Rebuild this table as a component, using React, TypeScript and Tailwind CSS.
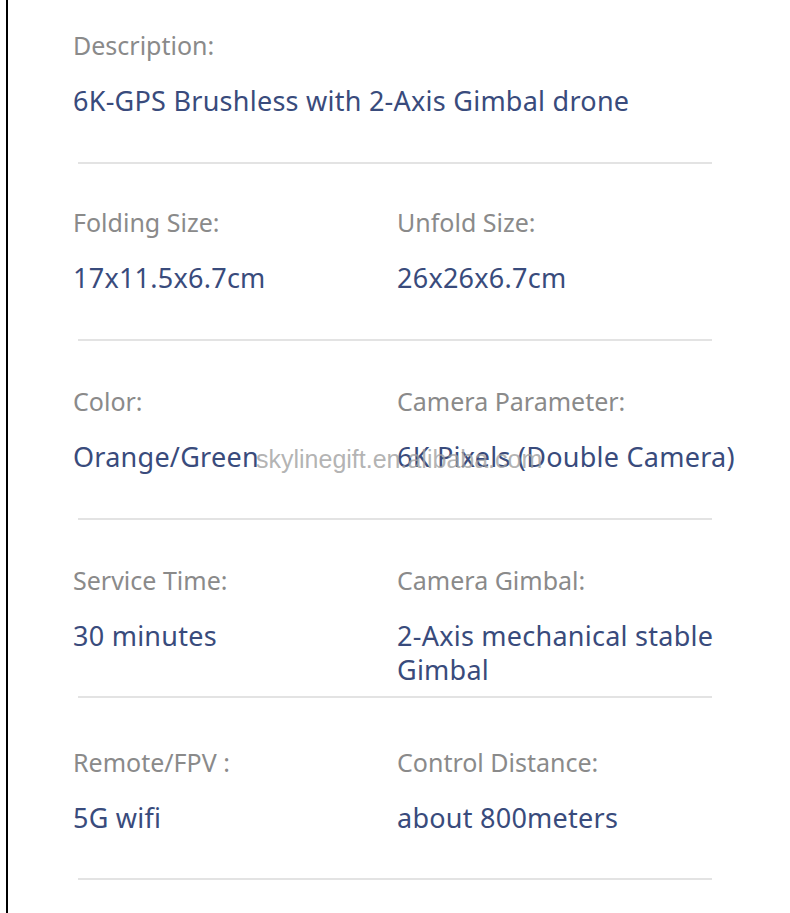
import React from "react";

type Spec = { label: string; value: string };

type Row = { cells: Spec[]; h: string; pt: string };

const rows: Row[] = [
  {
    cells: [{ label: "Description:", value: "6K-GPS Brushless with 2-Axis Gimbal drone" }],
    h: "h-[164px]",
    pt: "pt-[28px]",
  },
  {
    cells: [
      { label: "Folding Size:", value: "17x11.5x6.7cm" },
      { label: "Unfold Size:", value: "26x26x6.7cm" },
    ],
    h: "h-[177px]",
    pt: "pt-[41px]",
  },
  {
    cells: [
      { label: "Color:", value: "Orange/Green" },
      { label: "Camera Parameter:", value: "6K Pixels (Double Camera)" },
    ],
    h: "h-[179px]",
    pt: "pt-[43px]",
  },
  {
    cells: [
      { label: "Service Time:", value: "30 minutes" },
      { label: "Camera Gimbal:", value: "2-Axis mechanical stable Gimbal" },
    ],
    h: "h-[178px]",
    pt: "pt-[43px]",
  },
  {
    cells: [
      { label: "Remote/FPV :", value: "5G wifi" },
      { label: "Control Distance:", value: "about 800meters" },
    ],
    h: "h-[182px]",
    pt: "pt-[47px]",
  },
];

const Cell = ({ spec, pos }: { spec: Spec; pos: "full" | "left" | "right" }) => (
  <div className={pos === "left" ? "w-[324px] shrink-0" : "flex-1 min-w-0"}>
    <div className="text-[25px] leading-[34px] text-[#8a8a8a]">{spec.label}</div>
    <div className="mt-[22px] text-[27px] leading-[34px] tracking-[0.25px] text-[#394b7c]">
      {spec.value}
    </div>
  </div>
);

export default function App() {
  return (
    <div className="relative h-[913px] w-[790px] bg-white overflow-hidden font-['Noto_Sans',sans-serif]">
      <div className="ml-[6px] h-full border-l-2 border-black">
        <div className="pl-[65px] pr-[20px]">
          {rows.map((row, i) => (
            <div key={i} className={`${row.h} flex flex-col`}>
              <div className={`${row.pt} flex flex-1`}>
                {row.cells.map((s, j) => (
                  <Cell
                    key={j}
                    spec={s}
                    pos={row.cells.length === 1 ? "full" : j === 0 ? "left" : "right"}
                  />
                ))}
              </div>
              <div className="ml-[5px] h-[2px] w-[634px] bg-[#e3e3e3]" />
            </div>
          ))}
        </div>
      </div>
      {/* watermark */}
      <div className="absolute left-[256px] top-[441px] text-[25px] text-[#a0a0a0]/80 font-['Liberation_Sans',sans-serif]">
        skylinegift.en.alibaba.com
      </div>
    </div>
  );
}
